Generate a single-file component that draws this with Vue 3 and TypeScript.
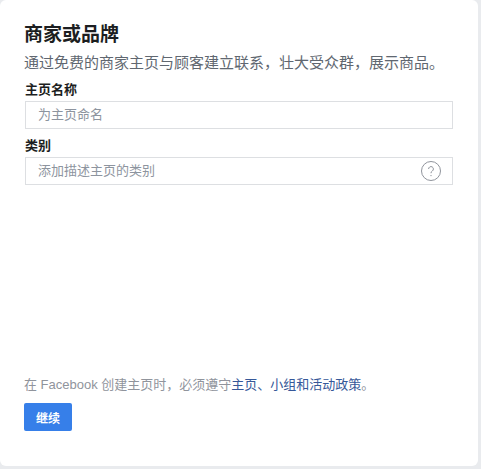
<script setup lang="ts">
const fields = [
  { label: '主页名称', placeholder: '为主页命名', help: false },
  { label: '类别', placeholder: '添加描述主页的类别', help: true },
]
</script>

<template>
  <div class="page">
    <form class="card" @submit.prevent>
      <h1 class="title">商家或品牌</h1>
      <p class="intro">通过免费的商家主页与顾客建立联系，壮大受众群，展示商品。</p>
      <div class="fields">
        <div v-for="field in fields" :key="field.label" class="field">
          <label class="label">{{ field.label }}</label>
          <div class="box">
            <input class="input" type="text" :placeholder="field.placeholder" />
            <svg v-if="field.help" class="help" width="20" height="20" viewBox="0 0 20 20" fill="none">
              <circle cx="10" cy="10" r="9.5" stroke="#90949c" />
              <path d="M7.6 8a2.4 2.4 0 1 1 3.7 2c-.9.6-1.3 1-1.3 2.2" stroke="#90949c" stroke-width="1" />
              <circle cx="10" cy="14.6" r=".7" fill="#90949c" />
            </svg>
          </div>
        </div>
      </div>
      <div class="footer">
        <p class="policy">在 Facebook 创建主页时，必须遵守<a class="link" href="#">主页、小组和活动政策</a>。</p>
        <button class="continue" type="button">继续</button>
      </div>
    </form>
  </div>
</template>

<style>
html, body { margin: 0; background: #e9ebee; }
</style>

<style scoped>
.page {
  width: 481px;
  height: 469px;
  overflow: hidden;
  box-sizing: border-box;
  padding: 0 3px 3px 0;
  font-family: "Liberation Sans", "Noto Sans CJK SC", sans-serif;
}
.card {
  height: 100%;
  box-sizing: border-box;
  background: #fff;
  border-radius: 6px;
  padding: 22px 25px 35px 24px;
  display: flex;
  flex-direction: column;
}
.title {
  margin: 0;
  font-size: 19px;
  line-height: 26px;
  font-weight: 700;
  color: #1c1e21;
}
.intro {
  margin: 5px 0 0;
  font-size: 15px;
  line-height: 20px;
  color: #606770;
  white-space: nowrap;
}
.fields {
  display: flex;
  flex-direction: column;
  gap: 8px;
  margin-top: 8px;
}
.field {
  display: flex;
  flex-direction: column;
  padding-left: 1px;
}
.label {
  font-size: 13px;
  line-height: 17px;
  font-weight: 700;
  color: #1c1e21;
  margin-bottom: 3px;
}
.box {
  height: 28px;
  box-sizing: border-box;
  border: 1px solid #dddfe2;
  display: flex;
  align-items: center;
  padding: 0 11px 0 12px;
}
.input {
  flex: 1;
  min-width: 0;
  border: 0;
  outline: 0;
  padding: 0 0 2px;
  background: transparent;
  font: inherit;
  font-size: 13px;
  color: #1c1e21;
}
.input::placeholder { color: #8d949e; opacity: 1; }
.help { flex: none; }
.footer { margin-top: auto; }
.policy {
  margin: 0;
  font-size: 13px;
  line-height: 18px;
  color: #90949c;
  white-space: nowrap;
}
.link { color: #365899; text-decoration: none; }
.continue {
  display: block;
  margin-top: 9px;
  width: 48px;
  height: 28px;
  border: 0;
  border-radius: 2px;
  background: #367fe9;
  color: #fff;
  font: inherit;
  font-size: 12px;
  font-weight: 700;
  padding: 0;
}
</style>
